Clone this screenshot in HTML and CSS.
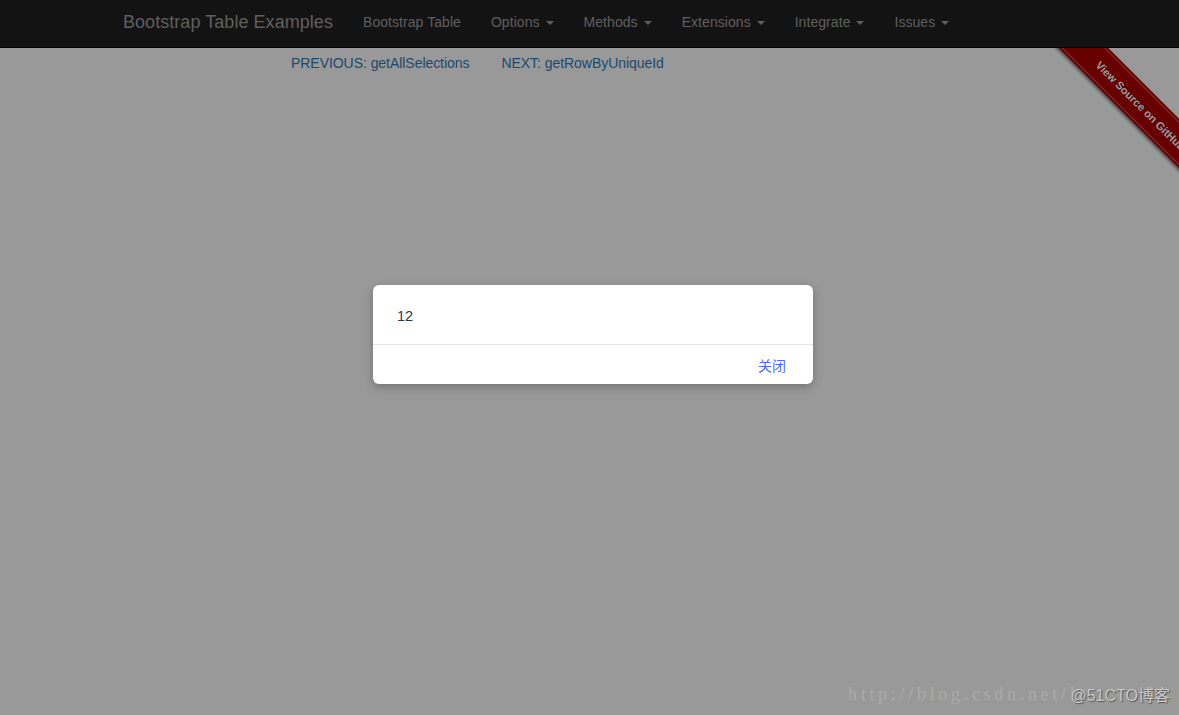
FILE: index.html
```html
<!DOCTYPE html>
<html lang="en">
<head>
<meta charset="utf-8">
<title>Bootstrap Table Examples</title>
<link rel="stylesheet" href="styles.css">
</head>
<body>
<div class="page">
  <nav class="navbar">
    <div class="nav-inner">
      <a class="brand">Bootstrap Table Examples</a>
      <ul class="nav">
        <li><a>Bootstrap Table</a></li>
        <li><a>Options <b class="caret"></b></a></li>
        <li><a>Methods <b class="caret"></b></a></li>
        <li><a>Extensions <b class="caret"></b></a></li>
        <li><a>Integrate <b class="caret"></b></a></li>
        <li><a>Issues <b class="caret"></b></a></li>
      </ul>
    </div>
  </nav>
  <div class="pager">
    <a class="pager-link">PREVIOUS: getAllSelections</a>
    <a class="pager-link">NEXT: getRowByUniqueId</a>
  </div>
  <div class="ribbon-wrap">
    <div class="ribbon"><span class="ribbon-text">View Source on GitHub</span></div>
  </div>
</div>
<div class="backdrop"></div>
<div class="modal-layer">
  <div class="dialog">
    <div class="dialog-body">12</div>
    <div class="dialog-footer"><a class="dialog-btn">关闭</a></div>
  </div>
</div>
<div class="watermark">
  <span class="wm-url">http://blog.csdn.net/l</span><span class="wm-51">@51CTO博客</span>
</div>
</body>
</html>
```
FILE: styles.css
```css
* { box-sizing: border-box; }
html, body { margin: 0; padding: 0; }
body {
  width: 1179px;
  height: 715px;
  overflow: hidden;
  background: #fff;
  font-family: "Liberation Sans", Arial, "Noto Sans CJK SC", sans-serif;
  font-size: 14px;
  color: #333;
  position: relative;
}
a { text-decoration: none; cursor: pointer; }

.page { position: relative; height: 715px; }

.navbar {
  height: 48px;
  background: #212121;
  border-bottom: 1px solid #080808;
}
.nav-inner {
  display: flex;
  align-items: center;
  height: 47px;
  padding-left: 108px;
}
.brand {
  font-size: 18px;
  line-height: 20px;
  padding: 12px 15px 15px;
  letter-spacing: 0.05px;
  color: #9d9d9d;
}
.nav {
  display: flex;
  list-style: none;
  margin: 0;
  padding: 0;
}
.nav a {
  display: block;
  padding: 12px 15px 15px;
  line-height: 20px;
  letter-spacing: 0.06px;
  color: #9d9d9d;
}
.caret {
  display: inline-block;
  width: 0;
  height: 0;
  margin-left: 2px;
  vertical-align: middle;
  border-top: 4px solid #9d9d9d;
  border-left: 4px solid transparent;
  border-right: 4px solid transparent;
}

.pager {
  display: flex;
  gap: 32px;
  padding-left: 291px;
  margin-top: 5px;
  line-height: 20px;
}
.pager-link { color: #337ab7; letter-spacing: -0.05px; }

.ribbon-wrap {
  position: absolute;
  top: 48px;
  right: 0;
  width: 150px;
  height: 150px;
  overflow: hidden;
}
.ribbon {
  position: absolute;
  left: -8px;
  top: 40px;
  width: 240px;
  height: 35px;
  transform: rotate(45deg);
  background: #b00000;
  box-shadow: 0 2px 3px rgba(0,0,0,0.5);
  display: flex;
  align-items: center;
  justify-content: center;
}
.ribbon::before {
  content: "";
  position: absolute;
  left: 0; right: 0; top: 2px; bottom: 2px;
  border-top: 1px solid rgba(255,255,255,0.35);
  border-bottom: 1px solid rgba(255,255,255,0.35);
}
.ribbon-text {
  font-size: 11px;
  font-weight: bold;
  color: #fff;
  text-shadow: 0 -1px 0 rgba(0,0,0,0.5);
}

.backdrop {
  position: absolute;
  inset: 0;
  background: rgba(0,0,0,0.4);
}

.modal-layer {
  position: absolute;
  inset: 0;
  padding: 285px 0 0 373px;
}
.dialog {
  width: 440px;
  background: #fff;
  border-radius: 6px;
  box-shadow: 0 3px 10px rgba(0,0,0,0.25);
}
.dialog-body {
  padding: 21px 24px 18px;
  line-height: 20px;
  font-size: 14.5px;
  color: #333;
  border-bottom: 1px solid #e5e5e5;
}
.dialog-footer {
  height: 39px;
  display: flex;
  align-items: center;
  justify-content: flex-end;
  padding-right: 27px;
}
.dialog-btn {
  color: #4a6cf5;
  font-size: 14px;
  font-family: "Noto Sans CJK SC", sans-serif;
}

.watermark {
  position: absolute;
  left: 848px;
  top: 682px;
  display: flex;
  align-items: center;
  white-space: nowrap;
}
.wm-url {
  font-family: "Liberation Serif", "DejaVu Serif", serif;
  font-size: 18px;
  letter-spacing: 3.7px;
  color: #ababab;
}
.wm-51 {
  margin-left: -8px;
  font-family: "Liberation Sans", "Noto Sans CJK SC", sans-serif;
  font-size: 16px;
  color: #c8c8c8;
  text-shadow: 1px 1px 1px rgba(0,0,0,0.45);
}
```
